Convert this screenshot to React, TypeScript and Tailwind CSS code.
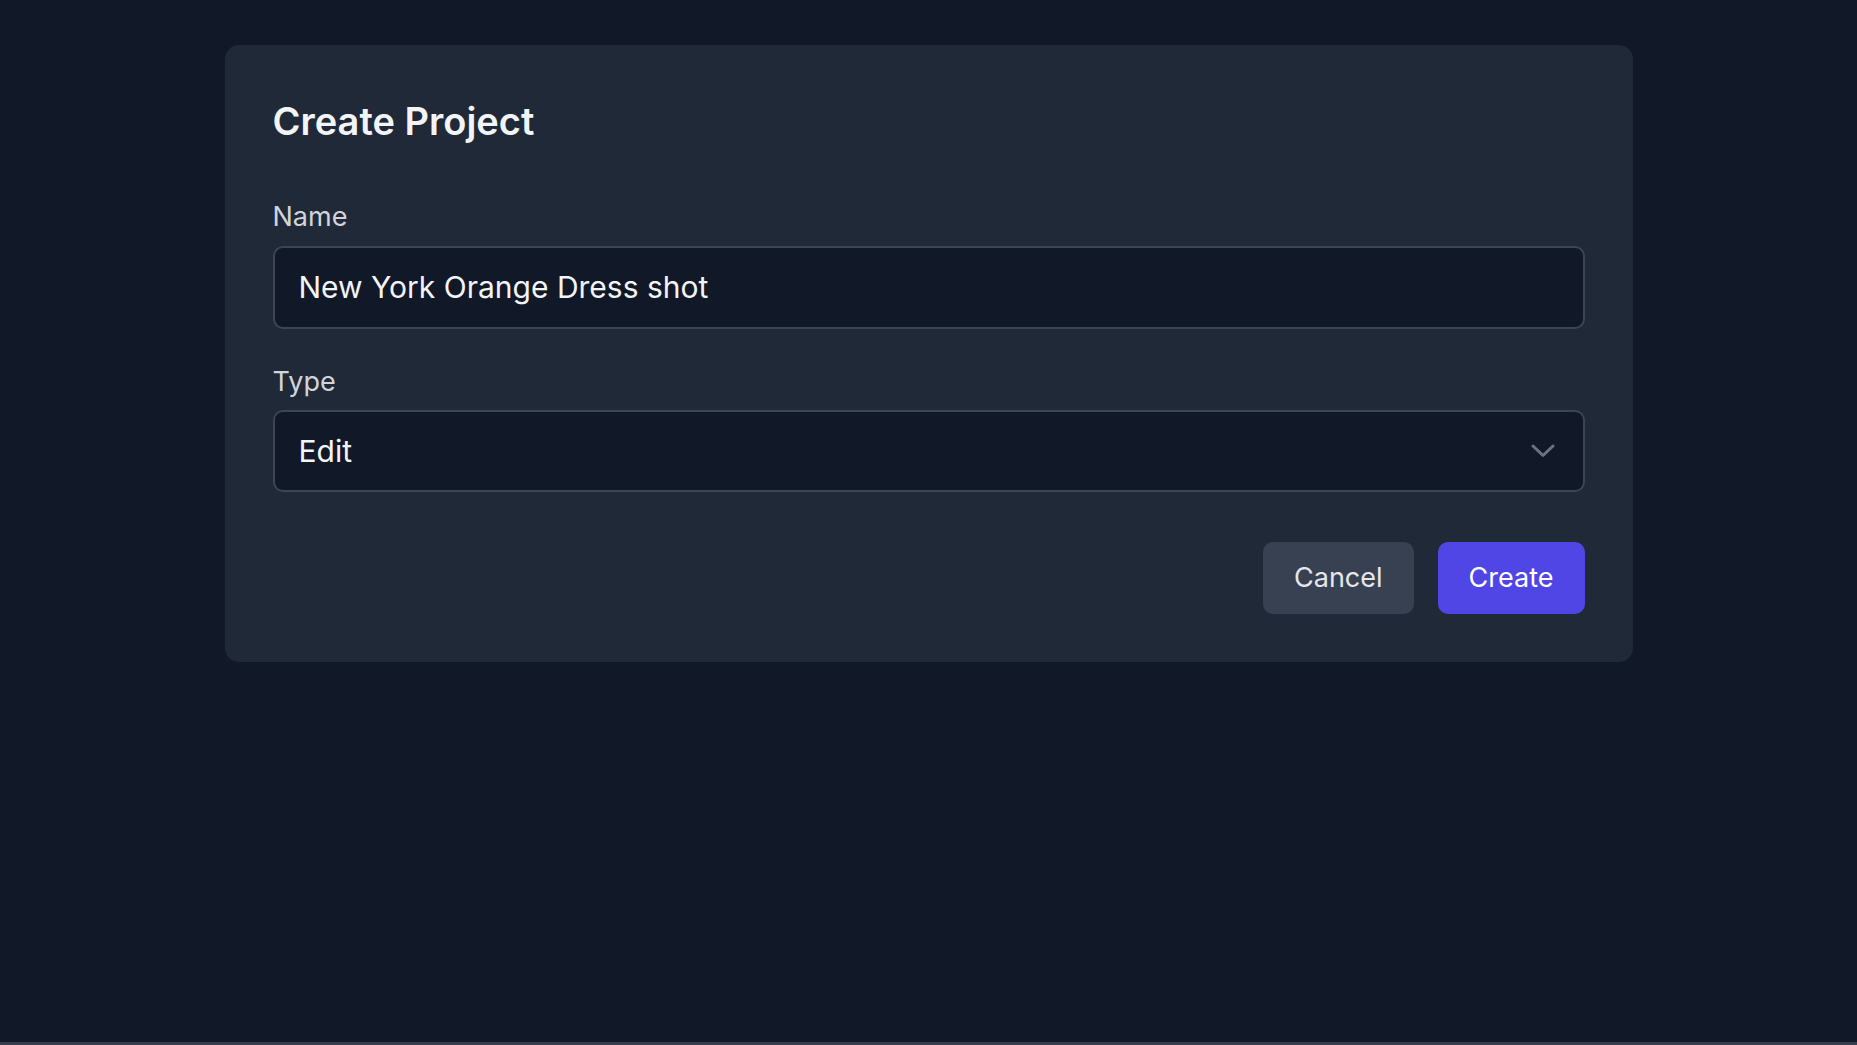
import React from "react";

export default function App() {
  return (
    <div
      className="flex min-h-screen flex-col bg-[#111827]"
      style={{ fontFamily: "Inter, 'Noto Sans', sans-serif" }}
    >
      <div className="flex-1 pt-[45px]">
        <div className="mx-auto w-[1408px] rounded-[14px] bg-[#1f2937] p-12">
          <h1 className="text-[38px] font-semibold leading-[56px] text-[#f3f4f6]">
            Create Project
          </h1>
          <div className="mt-[48px] flex flex-col">
            <label className="mb-[9px] text-[27px] leading-[40px] text-[#d1d5db]">
              Name
            </label>
            <div className="flex h-[83px] items-center rounded-[10px] border-2 border-[#3d4555] bg-[#111827] px-6">
              <span className="text-[30px] text-[#f3f4f6]">New York Orange Dress shot</span>
            </div>
            <label className="mb-[9px] mt-[33px] text-[27px] leading-[39px] text-[#d1d5db]">
              Type
            </label>
            <div className="flex h-[82px] items-center justify-between rounded-[10px] border-2 border-[#3d4555] bg-[#111827] pl-6 pr-[28px]">
              <span className="text-[30px] text-[#f3f4f6]">Edit</span>
              <svg width="24" height="14" viewBox="0 0 24 14" fill="none">
                <path
                  d="M2 2L12 11.5L22 2"
                  stroke="#6b7280"
                  strokeWidth="3"
                  strokeLinecap="round"
                  strokeLinejoin="round"
                />
              </svg>
            </div>
          </div>
          <div className="mt-[50px] flex justify-end gap-6">
            <button className="h-[72px] rounded-[10px] bg-[#374151] px-[31px] text-[27px] text-[#e5e7eb]">
              Cancel
            </button>
            <button className="h-[72px] rounded-[10px] bg-[#4f46e5] px-[31px] text-[27px] text-white">
              Create
            </button>
          </div>
        </div>
      </div>
      <div className="h-[3px] bg-[#373b4b]" />
    </div>
  );
}
